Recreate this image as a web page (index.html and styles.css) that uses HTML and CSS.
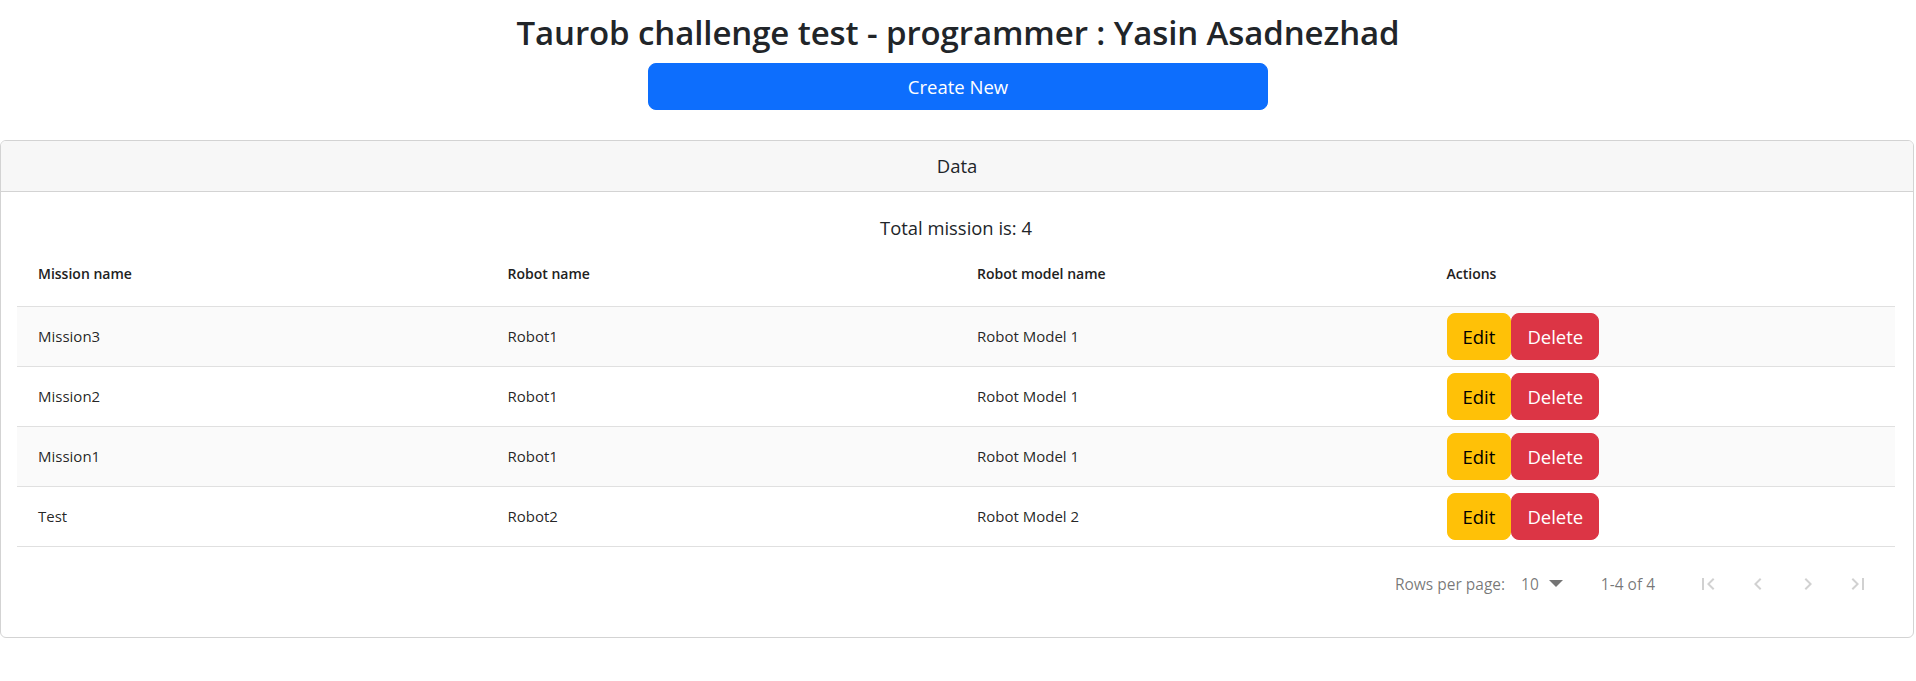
FILE: index.html
```html
<!DOCTYPE html>
<html lang="en">
<head>
<meta charset="utf-8">
<title>Taurob challenge test</title>
<link rel="stylesheet" href="styles.css">
</head>
<body>
<header class="page-head">
  <h1 class="title">Taurob challenge test - programmer : Yasin Asadnezhad</h1>
  <button class="btn btn-primary btn-create" type="button">Create New</button>
</header>
<section class="card">
  <div class="card-header">Data</div>
  <div class="card-body">
    <p class="total">Total mission is: 4</p>
    <div class="table">
      <div class="trow thead">
        <div class="cell">Mission name</div>
        <div class="cell">Robot name</div>
        <div class="cell">Robot model name</div>
        <div class="cell">Actions</div>
      </div>
      <div class="trow striped">
        <div class="cell">Mission3</div>
        <div class="cell">Robot1</div>
        <div class="cell">Robot Model 1</div>
        <div class="cell actions"><button class="btn btn-warning" type="button">Edit</button><button class="btn btn-danger" type="button">Delete</button></div>
      </div>
      <div class="trow">
        <div class="cell">Mission2</div>
        <div class="cell">Robot1</div>
        <div class="cell">Robot Model 1</div>
        <div class="cell actions"><button class="btn btn-warning" type="button">Edit</button><button class="btn btn-danger" type="button">Delete</button></div>
      </div>
      <div class="trow striped">
        <div class="cell">Mission1</div>
        <div class="cell">Robot1</div>
        <div class="cell">Robot Model 1</div>
        <div class="cell actions"><button class="btn btn-warning" type="button">Edit</button><button class="btn btn-danger" type="button">Delete</button></div>
      </div>
      <div class="trow">
        <div class="cell">Test</div>
        <div class="cell">Robot2</div>
        <div class="cell">Robot Model 2</div>
        <div class="cell actions"><button class="btn btn-warning" type="button">Edit</button><button class="btn btn-danger" type="button">Delete</button></div>
      </div>
    </div>
    <div class="pagination">
      <span class="rpp-label">Rows per page:</span>
      <span class="rpp-select">10<svg class="drop" width="14" height="8" viewBox="0 0 14 8"><path d="M0 0h14L7 7z"/></svg></span>
      <span class="range">1-4 of 4</span>
      <div class="pager-nav">
        <button class="pg-btn" type="button" aria-label="First Page"><svg width="24" height="24" viewBox="0 0 24 24"><path d="M18.41 16.59L13.82 12l4.59-4.59L17 6l-6 6 6 6zM6 6h2v12H6z"/></svg></button>
        <button class="pg-btn" type="button" aria-label="Previous Page"><svg width="24" height="24" viewBox="0 0 24 24"><path d="M15.41 7.41L14 6l-6 6 6 6 1.41-1.41L10.83 12z"/></svg></button>
        <button class="pg-btn" type="button" aria-label="Next Page"><svg width="24" height="24" viewBox="0 0 24 24"><path d="M10 6L8.59 7.41 13.17 12l-4.58 4.59L10 18l6-6z"/></svg></button>
        <button class="pg-btn" type="button" aria-label="Last Page"><svg width="24" height="24" viewBox="0 0 24 24"><path d="M5.59 7.41L10.18 12l-4.59 4.59L7 18l6-6-6-6zM16 6h2v12h-2z"/></svg></button>
      </div>
    </div>
  </div>
</section>
</body>
</html>
```
FILE: styles.css
```css
* { box-sizing: border-box; }

html, body {
  margin: 0;
  padding: 0;
  background: #fff;
}

body {
  font-family: "Open Sans", "Noto Sans", sans-serif;
  color: #212529;
}

.page-head {
  display: flex;
  flex-direction: column;
  align-items: center;
  padding-top: 13px;
}

.title {
  margin: 0 0 10px;
  font-size: 33px;
  font-weight: 600;
  line-height: 1.2;
  letter-spacing: -0.1px;
  color: #212529;
}

.btn {
  font-family: inherit;
  border: 1px solid transparent;
  cursor: pointer;
  font-size: 18.5px;
  line-height: 31px;
  padding: 7px 15px;
  border-radius: 8px;
}

.btn-primary {
  background: #0d6efd;
  border-color: #0d6efd;
  color: #fff;
}

.btn-create {
  width: 620px;
}

.btn-warning {
  background: #ffc107;
  border-color: #ffc107;
  color: #000;
}

.btn-danger {
  background: #dc3545;
  border-color: #dc3545;
  color: #fff;
}

.card {
  margin: 30px 2px 0 0;
  border: 1px solid #d3d3d3;
  border-radius: 6px;
  background: #fff;
}

.card-header {
  height: 51px;
  display: flex;
  align-items: center;
  justify-content: center;
  background: #f7f7f7;
  border-bottom: 1px solid #d3d3d3;
  border-radius: 5px 5px 0 0;
  font-size: 18.5px;
}

.card-body {
  padding: 16px 18px 16px 16px;
}

.total {
  margin: 0;
  text-align: center;
  font-size: 18.4px;
  line-height: 40px;
}

.table {
  margin-top: 6px;
  display: flex;
  flex-direction: column;
}

.trow {
  display: grid;
  grid-template-columns: repeat(4, 1fr);
  align-items: center;
  height: 60px;
  border-bottom: 1px solid #e0e0e0;
  font-size: 15px;
  color: rgba(0, 0, 0, 0.87);
}

.trow.thead {
  height: 53px;
  padding-bottom: 12px;
  font-weight: 600;
  font-size: 14px;
  color: #212121;
}

.trow.striped {
  background: #fafafa;
}

.cell {
  padding-left: 21px;
  padding-right: 16px;
}

.actions {
  display: flex;
}

.pagination {
  height: 74px;
  display: flex;
  align-items: center;
  justify-content: flex-end;
  padding-right: 17px;
  font-size: 15.5px;
  color: rgba(0, 0, 0, 0.54);
}

.rpp-select {
  display: inline-flex;
  align-items: center;
  margin-left: 16px;
  gap: 10px;
}

.drop {
  fill: rgba(0, 0, 0, 0.54);
  margin-top: 1px;
}

.range {
  margin-left: 38px;
}

.pager-nav {
  display: flex;
  gap: 10px;
  margin-left: 33px;
}

.pg-btn {
  width: 40px;
  height: 40px;
  padding: 8px;
  border: 0;
  background: transparent;
  display: flex;
  align-items: center;
  justify-content: center;
  cursor: default;
}

.pg-btn svg {
  fill: rgba(0, 0, 0, 0.18);
}
```
